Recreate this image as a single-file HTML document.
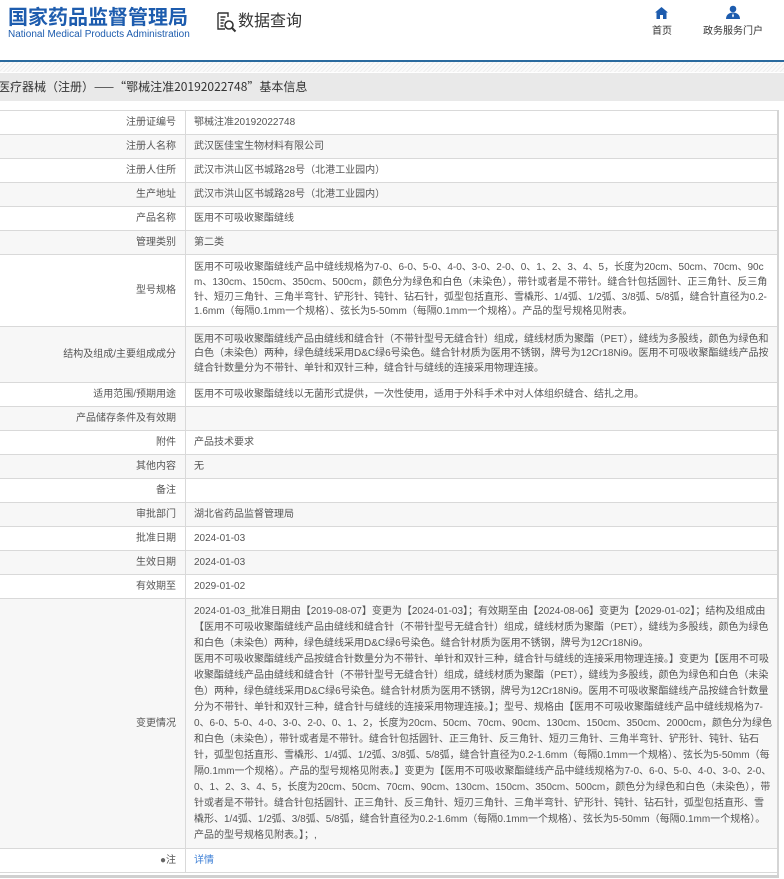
<!DOCTYPE html>
<html><head><meta charset="utf-8"><style>
*{margin:0;padding:0;box-sizing:border-box}
body{width:784px;height:879px;overflow:hidden;background:#fff;font-family:"Liberation Sans","Noto Sans CJK SC",sans-serif;color:#555;position:relative}
.t1{position:absolute;left:8px;top:4px;font-size:20px;line-height:24px;font-weight:bold;color:#1d5cae;letter-spacing:0px;font-family:"Noto Sans CJK SC",sans-serif}
.t2{position:absolute;left:8px;top:29px;font-size:10px;line-height:12px;color:#1d5cae}
.dq{position:absolute;left:238px;top:8px;font-size:16px;line-height:22px;color:#333;font-family:"Noto Sans CJK SC",sans-serif}
.nav{position:absolute;top:25px;font-size:10px;line-height:14px;color:#333}
.line{position:absolute;left:0;top:60px;width:784px;height:2px;background:#2a6a9e}
.hatch{position:absolute;left:0;top:62px;width:784px;height:10px;background:repeating-linear-gradient(135deg,#eee 0 1px,#fafafa 1px 3px)}
.bar{position:absolute;left:-2px;top:73px;width:786px;height:28px;background:#e9e9e9;font-size:12px;color:#333;line-height:28px;font-family:"Noto Sans CJK SC",sans-serif}
table{position:absolute;left:-1px;top:110px;width:779px;border-collapse:collapse;font-size:10px;font-family:"Liberation Sans","Noto Sans CJK SC",sans-serif}
td{border:1px solid #d9d9d9;height:24px;vertical-align:middle;color:#555;line-height:14px}
td.l{width:186px;text-align:right;padding-right:9px}
td.r{padding:0 4px 0 8px;word-break:break-all}
tr:nth-child(even) td{background:#f7f7f7}
.m td.r{line-height:14.6px;padding-top:4px;padding-bottom:4px}
.c td.r{line-height:16px;padding-top:4px;padding-bottom:4px}
.outer{position:absolute;left:0;top:875px;width:779px;height:3px;background:#d0d0d0}
.rb{position:absolute;left:777px;top:110px;width:2px;height:768px;background:#d5d5d5}
</style></head><body>
<div class="t1">国家药品监督管理局</div>
<div class="t2">National Medical Products Administration</div>
<svg style="position:absolute;left:216px;top:12px" width="22" height="22" viewBox="0 0 22 22"><path d="M2 1h10v4M2 1v16h7M4.5 5h5M4.5 8h4M4.5 11h3M4.5 14h3" stroke="#333" stroke-width="1.4" fill="none"/><circle cx="13" cy="13" r="4" stroke="#333" stroke-width="1.6" fill="none"/><path d="M16 16l3.5 3.5" stroke="#333" stroke-width="2"/></svg>
<div class="dq">数据查询</div>
<svg style="position:absolute;left:655px;top:7px" width="13" height="12" viewBox="0 0 13 12"><path d="M6.5 0L0 5.5h1.5V12h3.5V8h3v4h3.5V5.5H13z" fill="#1d5cae"/></svg>
<div class="nav" style="left:652px">首页</div>
<svg style="position:absolute;left:726px;top:5px" width="14" height="14" viewBox="0 0 14 14"><circle cx="7" cy="4" r="3.3" fill="#1d5cae"/><path d="M0 14c0-4 3-6.5 7-6.5s7 2.5 7 6.5z" fill="#1d5cae"/><path d="M7 8l-1 3 1 1.5 1-1.5z" fill="#fff"/></svg>
<div class="nav" style="left:703px">政务服务门户</div>
<div class="line"></div><div class="hatch"></div>
<div class="bar">医疗器械（注册）——“鄂械注准20192022748”基本信息</div>
<table>
<tr><td class="l">注册证编号</td><td class="r">鄂械注准20192022748</td></tr>
<tr><td class="l">注册人名称</td><td class="r">武汉医佳宝生物材料有限公司</td></tr>
<tr><td class="l">注册人住所</td><td class="r">武汉市洪山区书城路28号（北港工业园内）</td></tr>
<tr><td class="l">生产地址</td><td class="r">武汉市洪山区书城路28号（北港工业园内）</td></tr>
<tr><td class="l">产品名称</td><td class="r">医用不可吸收聚酯缝线</td></tr>
<tr><td class="l">管理类别</td><td class="r">第二类</td></tr>
<tr class="m" style="height:72px"><td class="l">型号规格</td><td class="r">医用不可吸收聚酯缝线产品中缝线规格为7-0、6-0、5-0、4-0、3-0、2-0、0、1、2、3、4、5，长度为20cm、50cm、70cm、90cm、130cm、150cm、350cm、500cm，颜色分为绿色和白色（未染色），带针或者是不带针。缝合针包括圆针、正三角针、反三角针、短刃三角针、三角半弯针、铲形针、钝针、钻石针，弧型包括直形、雪橇形、1/4弧、1/2弧、3/8弧、5/8弧，缝合针直径为0.2-1.6mm（每隔0.1mm一个规格）、弦长为5-50mm（每隔0.1mm一个规格）。产品的型号规格见附表。</td></tr>
<tr class="m" style="height:56px"><td class="l">结构及组成/主要组成成分</td><td class="r">医用不可吸收聚酯缝线产品由缝线和缝合针（不带针型号无缝合针）组成，缝线材质为聚酯（PET），缝线为多股线，颜色为绿色和白色（未染色）两种，绿色缝线采用D&amp;C绿6号染色。缝合针材质为医用不锈钢，牌号为12Cr18Ni9。医用不可吸收聚酯缝线产品按缝合针数量分为不带针、单针和双针三种，缝合针与缝线的连接采用物理连接。</td></tr>
<tr><td class="l">适用范围/预期用途</td><td class="r">医用不可吸收聚酯缝线以无菌形式提供，一次性使用，适用于外科手术中对人体组织缝合、结扎之用。</td></tr>
<tr><td class="l">产品储存条件及有效期</td><td class="r"></td></tr>
<tr><td class="l">附件</td><td class="r">产品技术要求</td></tr>
<tr><td class="l">其他内容</td><td class="r">无</td></tr>
<tr><td class="l">备注</td><td class="r"></td></tr>
<tr><td class="l">审批部门</td><td class="r">湖北省药品监督管理局</td></tr>
<tr><td class="l">批准日期</td><td class="r">2024-01-03</td></tr>
<tr><td class="l">生效日期</td><td class="r">2024-01-03</td></tr>
<tr><td class="l">有效期至</td><td class="r">2029-01-02</td></tr>
<tr class="c" style="height:250px"><td class="l">变更情况</td><td class="r">2024-01-03_批准日期由【2019-08-07】变更为【2024-01-03】；有效期至由【2024-08-06】变更为【2029-01-02】；结构及组成由【医用不可吸收聚酯缝线产品由缝线和缝合针（不带针型号无缝合针）组成，缝线材质为聚酯（PET），缝线为多股线，颜色为绿色和白色（未染色）两种，绿色缝线采用D&amp;C绿6号染色。缝合针材质为医用不锈钢，牌号为12Cr18Ni9。<br>医用不可吸收聚酯缝线产品按缝合针数量分为不带针、单针和双针三种，缝合针与缝线的连接采用物理连接。】变更为【医用不可吸收聚酯缝线产品由缝线和缝合针（不带针型号无缝合针）组成，缝线材质为聚酯（PET），缝线为多股线，颜色为绿色和白色（未染色）两种，绿色缝线采用D&amp;C绿6号染色。缝合针材质为医用不锈钢，牌号为12Cr18Ni9。医用不可吸收聚酯缝线产品按缝合针数量分为不带针、单针和双针三种，缝合针与缝线的连接采用物理连接。】；型号、规格由【医用不可吸收聚酯缝线产品中缝线规格为7-0、6-0、5-0、4-0、3-0、2-0、0、1、2，长度为20cm、50cm、70cm、90cm、130cm、150cm、350cm、2000cm，颜色分为绿色和白色（未染色），带针或者是不带针。缝合针包括圆针、正三角针、反三角针、短刃三角针、三角半弯针、铲形针、钝针、钻石针，弧型包括直形、雪橇形、1/4弧、1/2弧、3/8弧、5/8弧，缝合针直径为0.2-1.6mm（每隔0.1mm一个规格）、弦长为5-50mm（每隔0.1mm一个规格）。产品的型号规格见附表。】变更为【医用不可吸收聚酯缝线产品中缝线规格为7-0、6-0、5-0、4-0、3-0、2-0、0、1、2、3、4、5，长度为20cm、50cm、70cm、90cm、130cm、150cm、350cm、500cm，颜色分为绿色和白色（未染色），带针或者是不带针。缝合针包括圆针、正三角针、反三角针、短刃三角针、三角半弯针、铲形针、钝针、钻石针，弧型包括直形、雪橇形、1/4弧、1/2弧、3/8弧、5/8弧，缝合针直径为0.2-1.6mm（每隔0.1mm一个规格）、弦长为5-50mm（每隔0.1mm一个规格）。产品的型号规格见附表。】；,</td></tr>
<tr><td class="l"><span style="color:#666">●</span>注</td><td class="r" style="color:#3d7fd6">详情</td></tr>
</table>
<div class="rb"></div><div class="outer"></div>
</body></html>
